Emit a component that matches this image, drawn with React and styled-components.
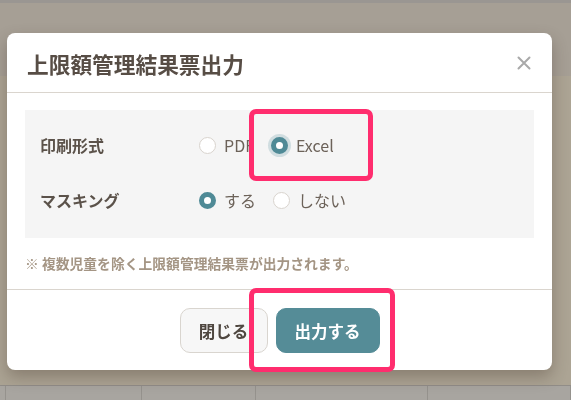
import styled, { createGlobalStyle } from 'styled-components';

const GlobalStyle = createGlobalStyle`
  html, body {
    margin: 0;
    padding: 0;
    width: 571px;
    height: 400px;
    overflow: hidden;
  }
  body {
    font-family: 'Noto Sans CJK JP', 'Noto Sans', sans-serif;
    background: #aba393;
  }
`;

const formatOptions = [
  { id: 'pdf', label: 'PDF', checked: false },
  { id: 'excel', label: 'Excel', checked: true, focused: true },
];

const maskOptions = [
  { id: 'on', label: 'する', checked: true },
  { id: 'off', label: 'しない', checked: false },
];

const tableCells = [5, 136, 114, 173, 143];

export default function App() {
  return (
    <>
      <GlobalStyle />
      <Page>
        <TopStrip />
        <HeaderArea />
        <ContentArea />
        <TableRow>
          {tableCells.map((w, i) => (
            <TableCell key={i} style={{ width: w }} />
          ))}
        </TableRow>
      </Page>

      <Overlay>
        <Modal>
          <ModalHeader>
            <Title>上限額管理結果票出力</Title>
            <CloseButton aria-label="close">
              <svg width="14" height="14" viewBox="0 0 14 14">
                <path d="M1.5 1.5 L12.5 12.5 M12.5 1.5 L1.5 12.5" stroke="#a9a9a9" strokeWidth="2" strokeLinecap="round" />
              </svg>
            </CloseButton>
          </ModalHeader>

          <ModalBody>
            <Panel>
              <FieldRow>
                <FieldLabel>印刷形式</FieldLabel>
                <OptionGroup>
                  {formatOptions.map(o => (
                    <Option key={o.id}>
                      <Radio checked={o.checked} focused={o.focused} />
                      <OptionText>{o.label}</OptionText>
                    </Option>
                  ))}
                </OptionGroup>
              </FieldRow>
              <FieldRow>
                <FieldLabel>マスキング</FieldLabel>
                <OptionGroup>
                  {maskOptions.map(o => (
                    <Option key={o.id}>
                      <Radio checked={o.checked} />
                      <OptionText>{o.label}</OptionText>
                    </Option>
                  ))}
                </OptionGroup>
              </FieldRow>
            </Panel>
            <Note>※ 複数児童を除く上限額管理結果票が出力されます。</Note>
          </ModalBody>

          <ModalFooter>
            <Button>閉じる</Button>
            <Button primary>出力する</Button>
          </ModalFooter>

          <Highlight top={76} left={242} width={124} height={72} />
          <Highlight top={255} left={242} width={146} height={84} />
        </Modal>
      </Overlay>
    </>
  );
}

const Page = styled.div`
  display: flex;
  flex-direction: column;
  height: 400px;
`;

const TopStrip = styled.div`
  height: 3px;
  background: #9a9692;
`;

const HeaderArea = styled.div`
  height: 73px;
  background: #a69f95;
`;

const ContentArea = styled.div`
  height: 309px;
  background: #aca494;
`;

const TableRow = styled.div`
  flex: 1;
  display: flex;
  background: #a8a5a0;
  border-top: 1px solid #918d88;
`;

const TableCell = styled.div`
  border-right: 1px solid #95928d;
`;

const Overlay = styled.div`
  position: fixed;
  inset: 0;
  padding: 33px 0 0 7px;
`;

const Modal = styled.div`
  position: relative;
  width: 545px;
  background: #fff;
  border-radius: 8px;
  box-shadow: 0 7px 16px rgba(60, 45, 35, 0.32);
`;

const ModalHeader = styled.div`
  height: 59px;
  padding: 0 20px;
  display: flex;
  align-items: center;
  justify-content: space-between;
  border-bottom: 1px solid #dad5ce;
`;

const Title = styled.h2`
  margin: 0;
  padding-top: 1px;
  font-size: 21.7px;
  font-weight: 700;
  color: #574d45;
  letter-spacing: 0;
`;

const CloseButton = styled.button`
  border: none;
  background: none;
  padding: 0;
  margin-right: 1px;
  display: flex;
  cursor: pointer;
`;

const ModalBody = styled.div`
  padding: 17px 18px 0;
`;

const Panel = styled.div`
  background: #f5f5f5;
  padding: 20px 15px 23px;
  display: flex;
  flex-direction: column;
  gap: 25px;
`;

const FieldRow = styled.div`
  height: 30px;
  display: flex;
  align-items: center;
`;

const FieldLabel = styled.div`
  width: 159px;
  font-size: 16px;
  font-weight: 700;
  color: #5b524a;
`;

const OptionGroup = styled.div`
  display: flex;
  align-items: center;
  gap: 17px;
`;

const Option = styled.label`
  display: flex;
  align-items: center;
  gap: 8px;
`;

const Radio = styled.span`
  box-sizing: border-box;
  width: 17px;
  height: 17px;
  border-radius: 50%;
  border: ${p => (p.checked ? '5px solid #4f8a96' : '1px solid #d9d4ce')};
  background: #fff;
  box-shadow: ${p => (p.focused ? '0 0 0 3px rgba(79, 138, 150, 0.22)' : 'none')};
`;

const OptionText = styled.span`
  font-size: 16px;
  color: #6c6259;
  line-height: 1;
`;

const Note = styled.p`
  margin: 17px 0 0;
  padding-bottom: 18px;
  font-size: 13.8px;
  font-weight: 700;
  color: #a49584;
  line-height: 16px;
`;

const ModalFooter = styled.div`
  border-top: 1px solid #dad5ce;
  padding: 18px 0 17px;
  display: flex;
  justify-content: center;
  gap: 8px;
`;

const Button = styled.button`
  box-sizing: border-box;
  height: 45px;
  min-width: ${p => (p.primary ? '104px' : '88px')};
  padding: 0 16px;
  border-radius: 10px;
  border: 1px solid ${p => (p.primary ? '#558c97' : '#d9d5cf')};
  background: ${p => (p.primary ? '#558c97' : '#f7f7f7')};
  color: ${p => (p.primary ? '#fff' : '#4f4740')};
  font-family: 'Noto Sans CJK JP', sans-serif;
  font-size: 16.5px;
  font-weight: 700;
  cursor: pointer;
`;

const Highlight = styled.div`
  position: absolute;
  top: ${p => p.top}px;
  left: ${p => p.left}px;
  width: ${p => p.width}px;
  height: ${p => p.height}px;
  box-sizing: border-box;
  border: 5px solid #ff2d6e;
  border-radius: 7px;
  pointer-events: none;
`;
